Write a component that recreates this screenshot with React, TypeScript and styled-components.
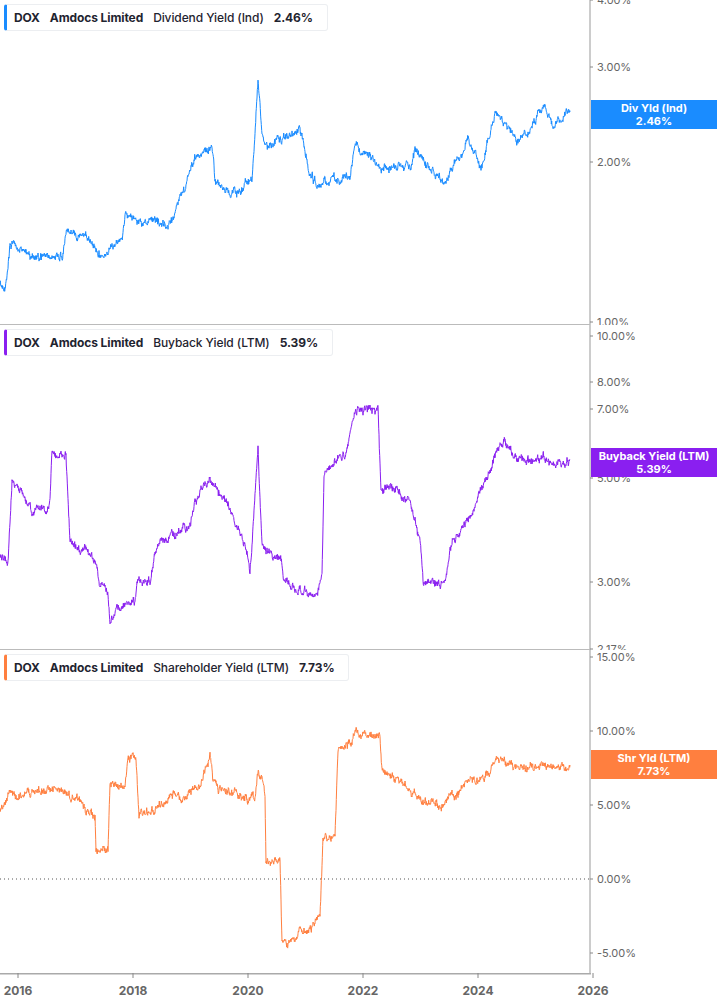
import React from 'react';
import styled, { createGlobalStyle } from 'styled-components';

const GlobalStyle = createGlobalStyle`
  body { margin: 0; background: #fff; font-family: Inter, "Liberation Sans", sans-serif; }
`;

const Page = styled.div`
  width: 717px;
  height: 1005px;
  display: flex;
  flex-direction: column;
  overflow: hidden;
`;

const PanelBox = styled.div<{ h: number }>`
  position: relative;
  height: ${({ h }) => h}px;
  flex: none;
`;

const Legend = styled.div<{ color: string }>`
  position: absolute;
  left: 4px;
  top: 4px;
  display: flex;
  gap: 10px;
  align-items: center;
  height: 25px;
  padding: 0 14px 0 7px;
  background: rgba(255,255,255,0.95);
  border: 1px solid #eceef1;
  border-left: 3px solid ${({ color }) => color};
  border-radius: 3px;
  font-size: 12px;
  letter-spacing: -0.1px;
  color: #1f2430;
`;

const LegendItem = styled.span<{ bold?: boolean }>`
  font-weight: ${({ bold }) => (bold ? 700 : 500)};
`;

const Badge = styled.div<{ color: string; top: number }>`
  position: absolute;
  left: 591px;
  right: 0;
  top: ${({ top }) => top}px;
  height: 29px;
  background: ${({ color }) => color};
  color: #fff;
  font-size: 11px;
  font-weight: 700;
  line-height: 13px;
  text-align: center;
  display: flex;
  flex-direction: column;
  justify-content: center;
`;

const AxisRow = styled.div`
  height: 32px;
  flex: none;
`;

type Pt = [number, number];

function rng(seed: number) {
  let s = seed;
  return () => {
    s = (s * 16807) % 2147483647;
    return s / 2147483647;
  };
}

function series(keys: Pt[], seed: number, amp: number): string {
  const r = rng(seed);
  const out: string[] = [];
  let noise = 0;
  for (let i = 0; i < keys.length - 1; i++) {
    const [x0, y0] = keys[i];
    const [x1, y1] = keys[i + 1];
    const steps = Math.max(1, Math.round((x1 - x0) * 3));
    for (let k = 0; k < steps; k++) {
      const t = k / steps;
      noise = noise * 0.85 + (r() - 0.5) * amp;
      const x = x0 + (x1 - x0) * t;
      const y = y0 + (y1 - y0) * t + noise + (r() - 0.5) * amp * 0.8;
      out.push(`${x.toFixed(1)},${y.toFixed(1)}`);
    }
  }
  const last = keys[keys.length - 1];
  out.push(`${last[0]},${last[1]}`);
  return out.join(' ');
}

const divKeys: Pt[] = [[0, 285], [5, 295], [10, 240], [30, 255], [62, 258], [66, 228], [90, 240], [103, 255], [122, 240], [125, 215], [165, 228], [172, 222], [185, 188], [195, 155], [212, 150], [215, 180], [230, 195], [240, 190], [252, 180], [258, 80], [262, 130], [268, 145], [300, 130], [310, 175], [320, 185], [350, 175], [355, 150], [380, 165], [410, 168], [415, 150], [445, 185], [468, 140], [475, 150], [480, 175], [495, 110], [505, 125], [520, 145], [545, 105], [552, 125], [570, 112]];
const buyKeys: Pt[] = [[0, 560], [8, 560], [12, 480], [28, 500], [32, 510], [50, 505], [52, 455], [66, 455], [70, 540], [95, 560], [100, 585], [108, 590], [110, 615], [135, 600], [138, 580], [150, 580], [155, 550], [190, 525], [195, 500], [210, 480], [228, 505], [245, 545], [250, 575], [258, 450], [262, 545], [280, 560], [285, 580], [300, 590], [318, 590], [322, 575], [324, 475], [345, 450], [352, 425], [356, 408], [378, 410], [381, 490], [400, 490], [410, 505], [420, 540], [423, 580], [445, 585], [450, 550], [470, 515], [485, 480], [500, 440], [520, 460], [540, 460], [565, 465], [570, 460]];
const shrKeys: Pt[] = [[0, 810], [10, 795], [60, 790], [66, 795], [95, 815], [96, 848], [108, 848], [110, 785], [125, 790], [128, 760], [136, 760], [139, 815], [160, 805], [200, 785], [210, 755], [213, 785], [235, 795], [255, 800], [258, 770], [265, 795], [266, 860], [280, 860], [282, 940], [295, 942], [300, 930], [320, 920], [323, 840], [335, 838], [338, 750], [350, 745], [355, 735], [380, 738], [382, 770], [405, 785], [420, 800], [440, 805], [460, 790], [480, 780], [500, 760], [520, 765], [545, 768], [570, 765]];

type Tick = { y: number; label: string };

const Panel: React.FC<{
  top: number;
  h: number;
  color: string;
  keys: Pt[];
  seed: number;
  ticks: Tick[];
  name: string;
  value: string;
  badge: string;
  badgeTop: number;
  zeroLine?: number;
}> = ({ top, h, color, keys, seed, ticks, name, value, badge, badgeTop, zeroLine }) => (
  <PanelBox h={h}>
    <svg width={717} height={h} viewBox={`0 ${top} 717 ${h}`} style={{ position: 'absolute', left: 0, top: 0 }}>
      {zeroLine !== undefined && (
        <line x1={0} x2={590} y1={zeroLine} y2={zeroLine} stroke="#555" strokeDasharray="1 3" />
      )}
      <polyline points={series(keys, seed, 5)} fill="none" stroke={color} strokeWidth={1} />
      <line x1={590} x2={590} y1={top} y2={top + h} stroke="#999" />
      {top + h < 970 && <line x1={0} x2={590} y1={top + h - 0.5} y2={top + h - 0.5} stroke="#bbb" />}
      {ticks.map((t) => (
        <g key={t.label + t.y}>
          <line x1={590} x2={593} y1={t.y} y2={t.y} stroke="#888" />
          <text x={597} y={t.y + 4} fontSize={11} fill="#666" fontFamily="Inter, 'Liberation Sans', sans-serif">
            {t.label}
          </text>
        </g>
      ))}
    </svg>
    <Legend color={color}>
      <LegendItem bold>DOX</LegendItem>
      <LegendItem bold>Amdocs Limited</LegendItem>
      <LegendItem>{name}</LegendItem>
      <LegendItem bold>{value}</LegendItem>
    </Legend>
    <Badge color={color} top={badgeTop - top}>
      <span>{badge}</span>
      <span>{value}</span>
    </Badge>
  </PanelBox>
);

const years = ['2016', '2018', '2020', '2022', '2024', '2026'];

const App: React.FC = () => (
  <Page>
    <GlobalStyle />
    <Panel top={0} h={325} color="#1a8cff" keys={divKeys} seed={11} name="Dividend Yield (Ind)" value="2.46%" badge="Div Yld (Ind)" badgeTop={100}
      ticks={[{ y: 0, label: '4.00%' }, { y: 67, label: '3.00%' }, { y: 162, label: '2.00%' }, { y: 322, label: '1.00%' }]} />
    <Panel top={325} h={325} color="#8a1ff0" keys={buyKeys} seed={23} name="Buyback Yield (LTM)" value="5.39%" badge="Buyback Yield (LTM)" badgeTop={448}
      ticks={[{ y: 336, label: '10.00%' }, { y: 382, label: '8.00%' }, { y: 409, label: '7.00%' }, { y: 478, label: '5.00%' }, { y: 582, label: '3.00%' }, { y: 649, label: '2.17%' }]} />
    <Panel top={650} h={323} color="#ff7f3f" keys={shrKeys} seed={37} name="Shareholder Yield (LTM)" value="7.73%" badge="Shr Yld (LTM)" badgeTop={750} zeroLine={879}
      ticks={[{ y: 657, label: '15.00%' }, { y: 731, label: '10.00%' }, { y: 805, label: '5.00%' }, { y: 879, label: '0.00%' }, { y: 953, label: '-5.00%' }]} />
    <AxisRow>
      <svg width={717} height={32}>
        <line x1={0} x2={591} y1={0.5} y2={0.5} stroke="#aaa" strokeWidth={2} />
        {years.map((y, i) => {
          const x = 18 + i * 115;
          return (
            <g key={y}>
              <line x1={x} x2={x} y1={0} y2={5} stroke="#888" />
              <text x={x} y={22} textAnchor="middle" fontSize={12} fontWeight={700} fill="#666" fontFamily="Inter, 'Liberation Sans', sans-serif">
                {y}
              </text>
            </g>
          );
        })}
      </svg>
    </AxisRow>
  </Page>
);

export default App;
